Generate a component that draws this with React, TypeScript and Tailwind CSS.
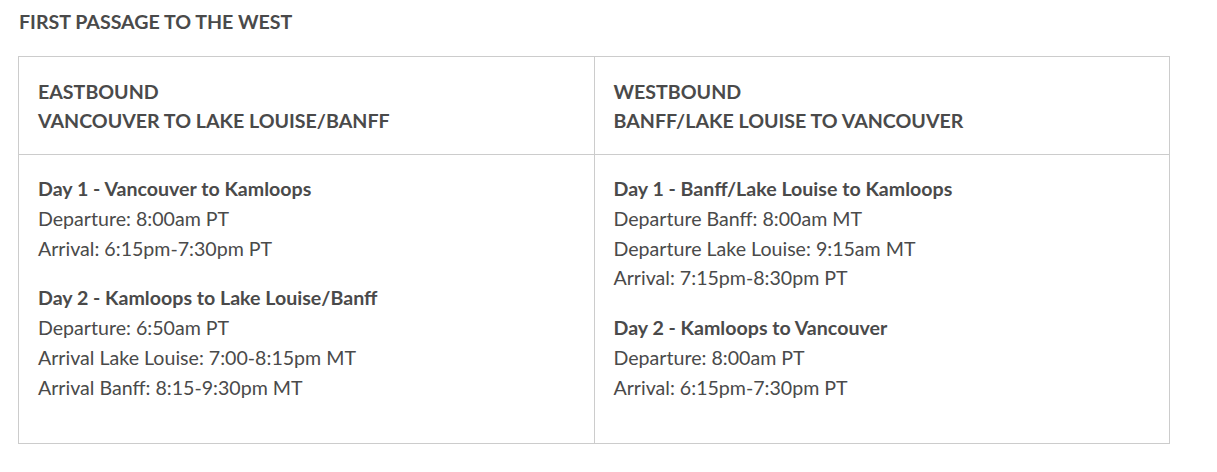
import React from 'react';

type Leg = { title: string; lines: string[] };

const eastbound: Leg[] = [
  {
    title: 'Day 1 - Vancouver to Kamloops',
    lines: ['Departure: 8:00am PT', 'Arrival: 6:15pm-7:30pm PT'],
  },
  {
    title: 'Day 2 - Kamloops to Lake Louise/Banff',
    lines: [
      'Departure: 6:50am PT',
      'Arrival Lake Louise: 7:00-8:15pm MT',
      'Arrival Banff: 8:15-9:30pm MT',
    ],
  },
];

const westbound: Leg[] = [
  {
    title: 'Day 1 - Banff/Lake Louise to Kamloops',
    lines: [
      'Departure Banff: 8:00am MT',
      'Departure Lake Louise: 9:15am MT',
      'Arrival: 7:15pm-8:30pm PT',
    ],
  },
  {
    title: 'Day 2 - Kamloops to Vancouver',
    lines: ['Departure: 8:00am PT', 'Arrival: 6:15pm-7:30pm PT'],
  },
];

const Schedule: React.FC<{ legs: Leg[] }> = ({ legs }) => (
  <>
    {legs.map((leg) => (
      <p key={leg.title} className="mb-[20px]">
        <strong className="font-bold">{leg.title}</strong>
        {leg.lines.map((line) => (
          <React.Fragment key={line}>
            <br />
            {line}
          </React.Fragment>
        ))}
      </p>
    ))}
  </>
);

export default function App() {
  return (
    <div
      className="min-h-[472px] bg-white pl-[18px] pt-[7px] text-[19.6px] leading-[29.8px] text-[#4a4a4a]"
      style={{ fontFamily: 'Lato, "Open Sans", sans-serif' }}
    >
      <h2 className="mb-[19px] pl-px text-[19.6px] font-bold leading-[30px]">FIRST PASSAGE TO THE WEST</h2>

      <table className="w-[1152px] table-fixed border-collapse">
        <thead>
          <tr>
            <th className="border border-[#cccccc] px-[19px] pt-[20px] pb-[19px] text-left align-top font-bold leading-[29px]">
              EASTBOUND
              <br />
              VANCOUVER TO LAKE LOUISE/BANFF
            </th>
            <th className="border border-[#cccccc] px-[19px] pt-[20px] pb-[19px] text-left align-top font-bold leading-[29px]">
              WESTBOUND
              <br />
              BANFF/LAKE LOUISE TO VANCOUVER
            </th>
          </tr>
        </thead>
        <tbody>
          <tr>
            <td className="border border-[#cccccc] px-[19px] pt-[19px] pb-[20px] align-top">
              <Schedule legs={eastbound} />
            </td>
            <td className="border border-[#cccccc] px-[19px] pt-[19px] pb-[20px] align-top">
              <Schedule legs={westbound} />
            </td>
          </tr>
        </tbody>
      </table>
    </div>
  );
}
